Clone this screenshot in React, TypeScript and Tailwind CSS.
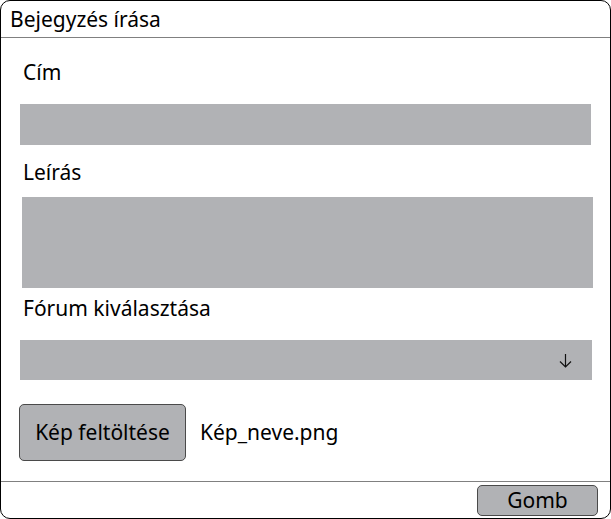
export default function App() {
  return (
    <div
      className="w-[611px] h-[519px] bg-white text-black flex flex-col border border-black rounded-[10px] overflow-hidden"
      style={{ fontFamily: '"Noto Sans", "Open Sans", sans-serif' }}
    >
      {/* Header */}
      <div className="h-[37px] shrink-0 flex items-center px-[9px] border-b border-[#808080] text-[21px] leading-none">
        Bejegyzés írása
      </div>

      {/* Form */}
      <div className="flex-1 flex flex-col pl-[19px] text-[21px]">
        <label className="mt-[20px] ml-[3px] h-[28px] leading-[28px]">Cím</label>
        <div className="mt-[18px] w-[571px] h-[41px] bg-[#b1b2b5]" />

        <label className="mt-[13px] ml-[3px] h-[28px] leading-[28px]">Leírás</label>
        <div className="mt-[11px] ml-[2px] w-[571px] h-[91px] bg-[#b1b2b5]" />

        <label className="mt-[6px] ml-[3px] h-[28px] leading-[28px]">Fórum kiválasztása</label>
        <div className="mt-[18px] w-[572px] h-[40px] bg-[#b1b2b5] flex items-center justify-end pr-[20px]">
          <svg width="13" height="15" viewBox="0 0 13 15" fill="none" stroke="#111" strokeWidth="1.2">
            <path d="M6.5 1v13M1 8.5l5.5 5.5 5.5-5.5" />
          </svg>
        </div>

        <div className="mt-[24px] flex items-center">
          <button className="-ml-[1px] w-[167px] h-[57px] bg-[#b1b2b5] border border-[#4a4a4a] rounded-[5px] text-[21px]">
            Kép feltöltése
          </button>
          <span className="ml-[14px]">Kép_neve.png</span>
        </div>
      </div>

      {/* Footer */}
      <div className="h-[37px] shrink-0 flex items-center justify-end pr-[12px] border-t border-[#808080]">
        <button className="w-[121px] h-[31px] bg-[#b1b2b5] border border-[#4a4a4a] rounded-[5px] text-[21px] leading-none">
          Gomb
        </button>
      </div>
    </div>
  );
}
